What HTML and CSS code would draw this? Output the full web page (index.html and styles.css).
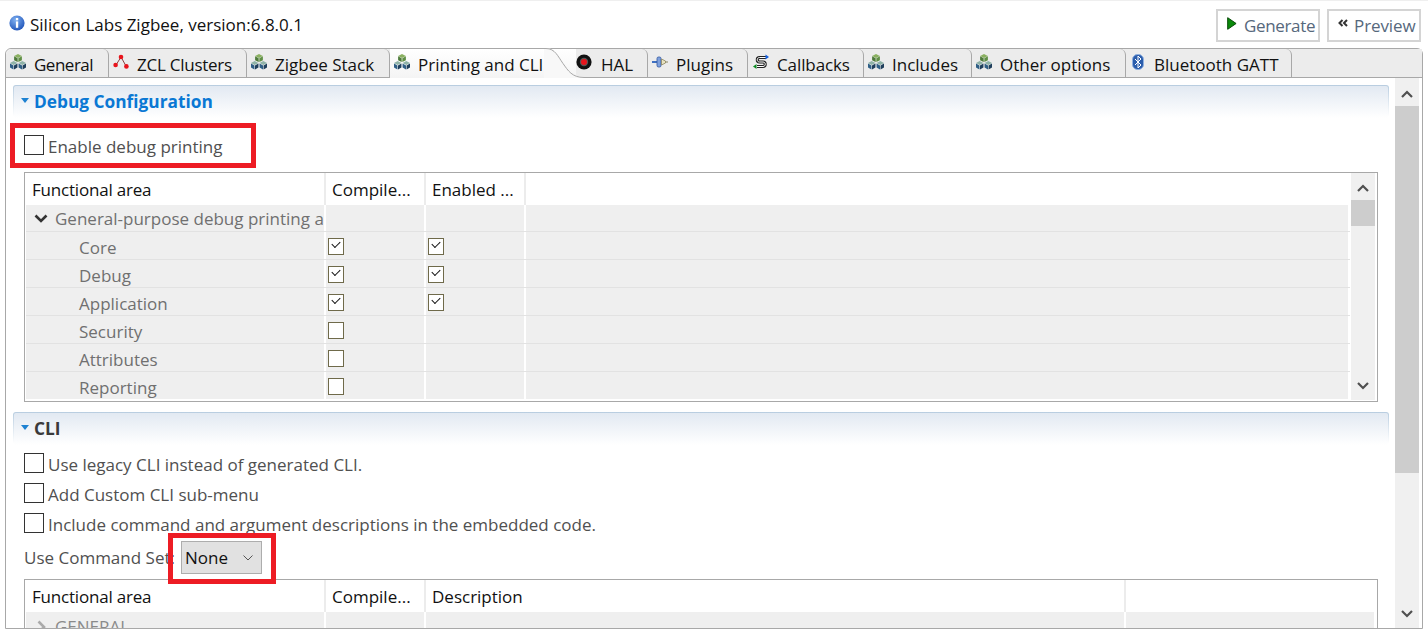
FILE: index.html
```html
<!DOCTYPE html>
<html lang="en">
<head>
  <meta charset="UTF-8">
  <title>Silicon Labs Zigbee</title>
  <link rel="stylesheet" href="styles.css">
</head>
<body>
<svg class="defs" width="0" height="0" aria-hidden="true">
  <symbol id="ic-cubes" viewBox="1 1 14 14">
    <path fill="#8ab060" d="M8 1l3.4 1.7L8 4.5 4.6 2.7z"/>
    <path fill="#4d7a3a" d="M4.6 3L7.7 4.7v3.4L4.6 6.4z"/>
    <path fill="#5f8f45" d="M11.4 3L8.3 4.7v3.4l3.1-1.7z"/>
    <path fill="#8fb3a8" d="M4.2 7.2l3.3 1.7-3.3 1.8L1 8.9z"/>
    <path fill="#2f5f86" d="M1 9.3l3 1.7v3.5l-3-1.7z"/>
    <path fill="#1f3f5c" d="M7.5 9.3L4.5 11v3.5l3-1.7z"/>
    <path fill="#8fb3a8" d="M11.8 7.2l3.3 1.7-3.3 1.8-3.3-1.8z"/>
    <path fill="#2f5f86" d="M8.5 9.3l3 1.7v3.5l-3-1.7z"/>
    <path fill="#1f3f5c" d="M15 9.3L12 11v3.5l3-1.7z"/>
  </symbol>
  <symbol id="ic-chev-up" viewBox="0 0 12 8">
    <path fill="none" stroke="#505050" stroke-width="2.2" d="M1 7l5-5 5 5"/>
  </symbol>
  <symbol id="ic-chev-down" viewBox="0 0 12 8">
    <path fill="none" stroke="#505050" stroke-width="2.2" d="M1 1l5 5 5-5"/>
  </symbol>
  <symbol id="ic-twist" viewBox="0 0 8 5">
    <path fill="#1e82d2" d="M0 0h8L4 5z"/>
  </symbol>
</svg>

<div class="topline"></div>
<header class="title-bar">
  <svg class="ic-info" viewBox="0 0 16 16" width="16" height="16">
    <defs>
      <radialGradient id="info-fill" cx="40%" cy="30%" r="75%">
        <stop offset="0" stop-color="#7fb0f0"/>
        <stop offset="1" stop-color="#1d52b8"/>
      </radialGradient>
    </defs>
    <circle cx="8" cy="8" r="7.6" fill="url(#info-fill)"/>
    <rect x="6.9" y="3" width="2.3" height="2.3" fill="#fff"/>
    <rect x="6.9" y="6.4" width="2.3" height="6.4" fill="#fff"/>
  </svg>
  <span class="title-text">Silicon Labs Zigbee, version:6.8.0.1</span>
  <div class="title-actions">
    <button class="tool-btn tool-generate">
      <svg class="tool-play" viewBox="0 0 10 13" width="10" height="13"><path fill="#0a8a0a" stroke="#064a06" d="M.7.7l8.4 5.8L.7 12.3z"/></svg>
      Generate
    </button>
    <button class="tool-btn tool-preview">
      <svg class="tool-back" viewBox="0 0 10 8" width="10" height="8"><path fill="none" stroke="#333" stroke-width="2" d="M4.5 1L1.5 4l3 3M9 1L6 4l3 3"/></svg>
      Preview
    </button>
  </div>
</header>

<div class="folder">
  <nav class="tabs">
    <div class="tab tab-general"><svg class="tab-ic"><use href="#ic-cubes"/></svg>General</div>
    <div class="tab tab-zcl">
      <svg class="tab-ic" viewBox="0 0 16 16">
        <path fill="none" stroke="#8a4040" stroke-width="1" d="M8 3L3 11M8 3l5 9"/>
        <circle cx="8" cy="3" r="2.3" fill="#e8141c"/><circle cx="2.6" cy="11" r="2.3" fill="#e8141c"/><circle cx="13.4" cy="12.4" r="2.3" fill="#e8141c"/>
      </svg>ZCL Clusters</div>
    <div class="tab"><svg class="tab-ic"><use href="#ic-cubes"/></svg>Zigbee Stack</div>
    <div class="tab tab-active"><svg class="tab-ic"><use href="#ic-cubes"/></svg>Printing and CLI
      <svg class="tab-curve" viewBox="0 0 40 30" width="40" height="30">
        <path fill="#f8f8f8" d="M0 0h2c9 0 12 8 17 15s9 14 21 14v1H0z"/>
        <path fill="none" stroke="#a8a8a8" d="M0 .5h2c9 0 12 8 17 15s9 14 21 14"/>
      </svg>
    </div>
    <div class="tab tab-hal">
      <svg class="tab-ic" viewBox="0 0 16 16">
        <circle cx="8" cy="8" r="7.6" fill="#111"/><circle cx="8" cy="8" r="4.2" fill="#555"/><circle cx="8" cy="8" r="3" fill="#e8141c"/>
      </svg>HAL</div>
    <div class="tab">
      <svg class="tab-ic" viewBox="0 0 16 16">
        <path fill="#3f6fc0" d="M0 7h5v2H0z"/><rect x="5" y="3" width="4" height="10" rx="1.5" fill="#7fa0dc" stroke="#2f55a0" stroke-width=".8"/>
        <path fill="#e8e2c0" stroke="#8a8460" stroke-width=".8" d="M9.5 5l4 2v2l-4 2z"/><path stroke="#8a8460" d="M13.5 8H16"/>
      </svg>Plugins</div>
    <div class="tab tab-callbacks">
      <svg class="tab-ic" viewBox="0 0 16 16">
        <path fill="none" stroke="#222" stroke-width="3" d="M13 3.5H6.5C3.5 3.5 3.5 8 6.5 8h3.5c3 0 3 4.5 0 4.5H4"/>
        <path fill="none" stroke="#fff" stroke-width="1" d="M13 3.5H6.5C3.5 3.5 3.5 8 6.5 8h3.5c3 0 3 4.5 0 4.5H4"/>
        <path fill="#1560e0" d="M12.5 .5L16 3l-3.500 2.500z"/><path fill="#0a8a20" d="M3.500 10L0 12.500 3.500 15z"/>
      </svg>Callbacks</div>
    <div class="tab"><svg class="tab-ic"><use href="#ic-cubes"/></svg>Includes</div>
    <div class="tab"><svg class="tab-ic"><use href="#ic-cubes"/></svg>Other options</div>
    <div class="tab">
      <svg class="tab-ic" viewBox="0 0 16 16">
        <rect x="2.500" y=".5" width="11" height="15" rx="5" fill="#2a5cab" stroke="#8fb0e0"/>
        <path fill="none" stroke="#fff" d="M5 5l6 6-3 3V2l3 3-6 6"/>
      </svg>Bluetooth GATT</div>
  </nav>

  <div class="folder-body">
    <main class="form">
      <section class="group">
        <h2 class="group-head"><svg class="twist"><use href="#ic-twist"/></svg>Debug Configuration</h2>
        <label class="check check-first"><span class="box"></span>Enable debug printing</label>
        <div class="tbl tbl-debug">
          <div class="tbl-main">
            <div class="row row-head"><div class="cell">Functional area</div><div class="cell">Compile...</div><div class="cell">Enabled ...</div><div class="cell"></div></div>
            <div class="row row-short"><div class="cell cell-name"><svg class="tree-arrow" viewBox="0 0 14 9" width="14" height="9"><path fill="none" stroke="#333" stroke-width="2.6" d="M1.500 1.500L7 7l5.500-5.500"/></svg>General-purpose debug printing a</div><div class="cell"></div><div class="cell"></div><div class="cell"></div></div>
            <div class="row"><div class="cell cell-name cell-child">Core</div><div class="cell"><span class="mini on"></span></div><div class="cell"><span class="mini on"></span></div><div class="cell"></div></div>
            <div class="row"><div class="cell cell-name cell-child">Debug</div><div class="cell"><span class="mini on"></span></div><div class="cell"><span class="mini on"></span></div><div class="cell"></div></div>
            <div class="row"><div class="cell cell-name cell-child">Application</div><div class="cell"><span class="mini on"></span></div><div class="cell"><span class="mini on"></span></div><div class="cell"></div></div>
            <div class="row"><div class="cell cell-name cell-child">Security</div><div class="cell"><span class="mini"></span></div><div class="cell"></div><div class="cell"></div></div>
            <div class="row"><div class="cell cell-name cell-child">Attributes</div><div class="cell"><span class="mini"></span></div><div class="cell"></div><div class="cell"></div></div>
            <div class="row row-last"><div class="cell cell-name cell-child">Reporting</div><div class="cell"><span class="mini"></span></div><div class="cell"></div><div class="cell"></div></div>
          </div>
          <div class="scroll scroll-small">
            <svg class="arrow"><use href="#ic-chev-up"/></svg>
            <div class="thumb thumb-small"></div>
            <svg class="arrow arrow-end"><use href="#ic-chev-down"/></svg>
          </div>
        </div>
      </section>

      <section class="group group-cli">
        <h2 class="group-head group-head-dark"><svg class="twist"><use href="#ic-twist"/></svg>CLI</h2>
        <div class="check-list">
          <label class="check"><span class="box"></span>Use legacy CLI instead of generated CLI.</label>
          <label class="check"><span class="box"></span>Add Custom CLI sub-menu</label>
          <label class="check"><span class="box"></span>Include command and argument descriptions in the embedded code.</label>
        </div>
        <div class="command-set">
          <span class="command-label">Use Command Set:</span>
          <div class="combo">None<svg viewBox="0 0 10 6" width="10" height="6"><path fill="none" stroke="#555" d="M.5.5L5 5 9.500.5"/></svg></div>
        </div>
        <div class="tbl tbl-cli">
          <div class="tbl-main">
            <div class="row row-head row-head-cli"><div class="cell">Functional area</div><div class="cell">Compile...</div><div class="cell">Description</div><div class="cell"></div></div>
            <div class="row row-cli"><div class="cell cell-name"><svg class="tree-arrow tree-closed" viewBox="0 0 9 14" width="9" height="14"><path fill="none" stroke="#aaa" stroke-width="2.6" d="M1.500 1.500L7 7l-5.500 5.500"/></svg>GENERAL</div><div class="cell"></div><div class="cell"></div><div class="cell"></div></div>
          </div>
        </div>
      </section>
    </main>
    <div class="scroll scroll-main">
      <svg class="arrow"><use href="#ic-chev-up"/></svg>
      <div class="thumb thumb-main"></div>
      <svg class="arrow arrow-end"><use href="#ic-chev-down"/></svg>
    </div>
  </div>
</div>

<div class="callout callout-debug"></div>
<div class="callout callout-combo"></div>
</body>
</html>
```

FILE: styles.css
```css
html,body{margin:0;height:630px;overflow:hidden;background:#fff;}
body{position:relative;font-family:"Open Sans","Noto Sans",sans-serif;font-size:17px;color:#111;}
.defs{position:absolute;}
.topline{height:1px;background:#efefef;}

.title-bar{height:47px;display:flex;align-items:center;padding:0 7px 0 9px;box-sizing:border-box;}
.ic-info{margin:-4px 5px 0 0;flex:none;}
.title-text{margin-top:-1px;}
.title-actions{margin-left:auto;display:flex;gap:7px;margin-top:1px;}
.tool-btn{height:33px;box-sizing:border-box;border:2px solid #d4d4d4;background:#fff;font:inherit;color:#56687c;display:flex;align-items:center;padding:0 0 0 9px;gap:7px;white-space:nowrap;}
.tool-generate{width:104px;letter-spacing:-.35px;}
.tool-preview{width:94px;gap:6px;letter-spacing:-.1px;}
.tool-play{margin-top:-4px;}
.tool-back{margin-top:-4px;}

.folder{margin:0 5px;height:581px;box-sizing:border-box;border:1px solid #a8a8a8;border-radius:6px 6px 0 0;display:flex;flex-direction:column;}
.tabs{height:28px;background:#ececec;border-bottom:1px solid #a8a8a8;border-radius:6px 0 0 0;display:grid;grid-template-columns:103px 138px 143px 186px 72px 100px 116px 108px 154px 166px;flex:none;}
.tab{position:relative;display:flex;align-items:center;padding:1px 0 0 4px;border-right:1px solid #a8a8a8;border-top-right-radius:6px;white-space:nowrap;box-sizing:border-box;}
.tab-ic{width:16px;height:16px;margin-right:8px;margin-top:-4px;flex:none;}
.tab-general{letter-spacing:-.5px;}
.tab-zcl{letter-spacing:-.25px;}
.tab-callbacks{padding-left:5px;letter-spacing:-.1px;}
.tab-active{height:29px;background:linear-gradient(#fff,#f4f4f4);border-right:0;border-radius:0;}
.tab-curve{position:absolute;right:-8px;top:-1px;z-index:1;}
.tab-hal{padding-left:0;}
.tab-hal .tab-ic{margin-right:9px;}

.folder-body{flex:1;min-height:0;display:flex;background:#fff;}
.form{flex:1;min-width:0;overflow:hidden;padding:7px 6px 0 7px;}
.group-head{margin:0;height:33px;box-sizing:border-box;display:flex;align-items:center;border:1px solid transparent;border-bottom:0;border-radius:3px 3px 0 0;background:linear-gradient(#e2e9f2,#fff) padding-box,linear-gradient(#b8cde0,#fff 95%) border-box;font-size:17.3px;font-weight:700;color:#0a78d4;padding-bottom:2px;}
.group-head-dark{color:#3a3a3a;}
.twist{width:8px;height:5px;margin:0 5px 2px 7px;flex:none;}

.check{display:flex;align-items:center;height:20px;box-sizing:border-box;padding:2px 0 0 11px;color:#505050;}
.check-first{margin-top:17px;}
.box{width:20px;height:20px;box-sizing:border-box;border:1px solid #333;background:#fff;margin:-2px 4px 0 0;flex:none;}
.check-list{margin-top:8px;display:flex;flex-direction:column;gap:10px;}

.tbl{margin:0 11px;border:1px solid #a8a8a8;display:flex;padding:0 2px 0 1px;box-sizing:border-box;}
.tbl-debug{height:230px;margin-top:17px;}
.tbl-main{flex:1;min-width:0;}
.group-cli{margin-top:10px;}

.row{display:grid;grid-template-columns:300px 100px 100px 1fr;height:28px;background:#efefef;border-bottom:1px solid #e2e2e2;box-sizing:border-box;}
.row-short{height:27px;}
.row-last{height:27px;border-bottom:0;}
.row-head{height:32px;background:#fff;border-bottom:0;color:#111;}
.cell{border-right:2px solid #fff;display:flex;align-items:center;padding:1px 0 0 6px;white-space:nowrap;overflow:hidden;box-sizing:border-box;}
.row-head .cell{border-right-color:#ececec;}
.row-head .cell:first-child{letter-spacing:-.2px;}
.row-head .cell:last-child{border-right:0;}
.row:not(.row-head) .cell:not(:first-child){padding:2px 0 0 2px;}
.cell-name{color:#707070;}
.row:not(.row-head) .cell-child{padding:3px 0 0 53px;}
.tree-arrow{margin:0 7px 0 2px;flex:none;}
.tree-closed{margin:0 9px 0 5px;}

.mini{width:16px;height:17px;box-sizing:border-box;border:1px solid #6f6a4a;background:#fff;position:relative;display:block;}
.mini.on::after{content:"";position:absolute;left:3px;top:2px;width:7px;height:4px;border:solid #111;border-width:0 0 1.5px 1.5px;transform:rotate(-45deg);}

.scroll{background:#f0f0f0;display:flex;flex-direction:column;flex:none;}
.scroll-small{width:24px;margin:0 0 1px 1px;}
.scroll-main{width:24px;margin-right:3px;}
.arrow{width:12px;height:8px;margin:12px auto 0;display:block;flex:none;}
.scroll-small .arrow{margin-top:11px;}
.arrow-end,.scroll-small .arrow-end{margin:auto auto 10px;}
.thumb{background:#cdcdcd;flex:none;}
.thumb-small{height:26px;margin-top:8px;}
.thumb-main{height:367px;margin-top:8px;}

.command-set{display:flex;align-items:center;height:33px;margin-top:8px;padding-left:11px;}
.command-label{color:#505050;width:157px;white-space:nowrap;flex:none;}
.combo{width:81px;height:33px;box-sizing:border-box;border:1px solid #adadad;background:#e1e1e1;display:flex;align-items:center;justify-content:space-between;padding:0 8px 0 3px;color:#111;}
.tbl-cli{margin-top:5px;height:70px;padding-right:1px;}
.row-head-cli{grid-template-columns:300px 100px 700px 1fr;}
.row-cli{grid-template-columns:300px 100px 700px 1fr;height:38px;align-items:start;}
.row-cli .cell{height:28px;color:#8a8a8a;}

.callout{position:absolute;border:5px solid #ed1c24;box-sizing:border-box;pointer-events:none;}
.callout-debug{left:10px;top:123px;width:246px;height:45px;}
.callout-combo{left:168px;top:533px;width:108px;height:51px;}
```
